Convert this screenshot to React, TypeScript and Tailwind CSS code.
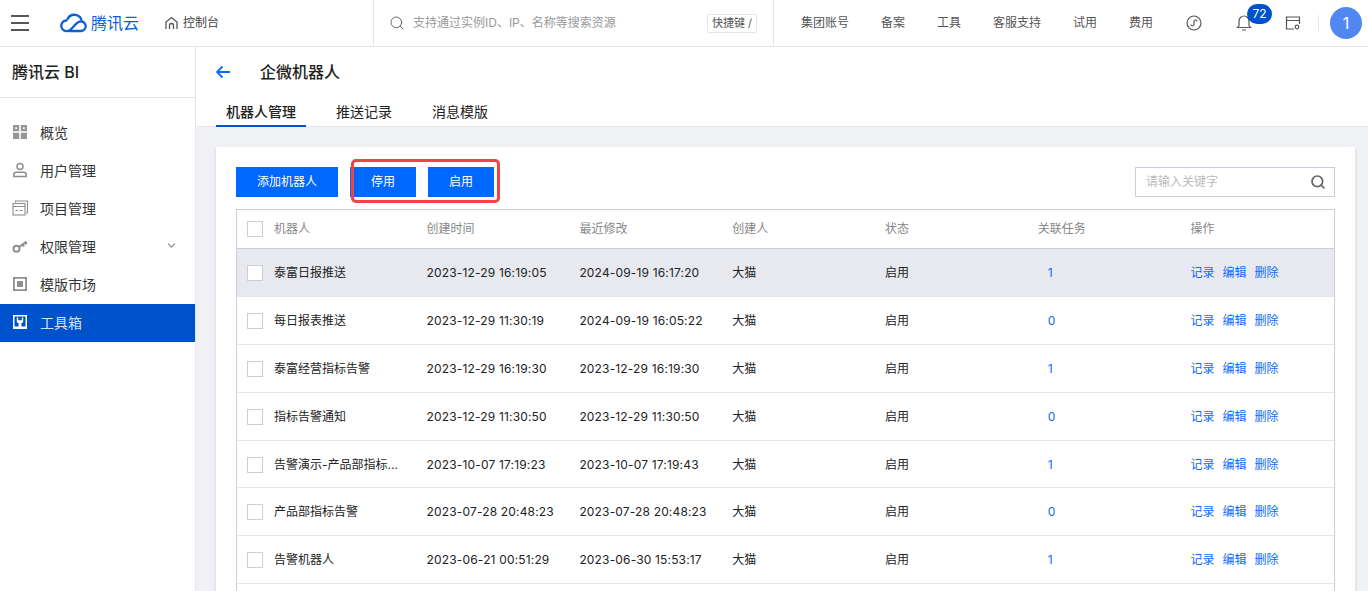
import { ChevronDown, Search } from 'lucide-react';

const font = { fontFamily: '"Inter", "Noto Sans CJK SC", sans-serif' };

const topLinks = ['集团账号', '备案', '工具', '客服支持', '试用', '费用'];

const rows = [
  { name: '泰富日报推送', created: '2023-12-29 16:19:05', updated: '2024-09-19 16:17:20', tasks: 1 },
  { name: '每日报表推送', created: '2023-12-29 11:30:19', updated: '2024-09-19 16:05:22', tasks: 0 },
  { name: '泰富经营指标告警', created: '2023-12-29 16:19:30', updated: '2023-12-29 16:19:30', tasks: 1 },
  { name: '指标告警通知', created: '2023-12-29 11:30:50', updated: '2023-12-29 11:30:50', tasks: 0 },
  { name: '告警演示-产品部指标...', created: '2023-10-07 17:19:23', updated: '2023-10-07 17:19:43', tasks: 1 },
  { name: '产品部指标告警', created: '2023-07-28 20:48:23', updated: '2023-07-28 20:48:23', tasks: 0 },
  { name: '告警机器人', created: '2023-06-21 00:51:29', updated: '2023-06-30 15:53:17', tasks: 1 },
];

function CloudLogo() {
  return (
    <svg width="27" height="20" viewBox="0 0 27 20" fill="none" stroke="#0d5fd8" strokeWidth="2.300" strokeLinecap="round">
      <path d="M9 18h12a4.800 4.800 0 0 0 .8-9.500A7.500 7.500 0 0 0 7.600 6" />
      <path d="M6.500 7.500a5.300 5.300 0 1 0 1.500 10.400c2.400-.5 4.300-3 6.200-5.100 2-2.200 3.700-4.200 6.600-4.400" />
    </svg>
  );
}

function NavIcon({ name }: { name: string }) {
  if (name === 'grid') {
    return (
      <svg width="16" height="16" viewBox="0 0 16 16" fill="#959595" className="shrink-0">
        <path fillRule="evenodd" d="M1 1h6.200v6.200H1zM3.200 3.200v1.800h1.800V3.200zM8.800 1H15v6.200H8.800zM11 3.200v1.800h1.800V3.200zM1 8.800h6.200V15H1zM8.800 8.800H15V15H8.800z" />
      </svg>
    );
  }
  if (name === 'user') {
    return (
      <svg width="16" height="16" viewBox="0 0 16 16" fill="none" stroke="#8f8f8f" strokeWidth="1.500" className="shrink-0">
        <circle cx="8" cy="4.500" r="3" />
        <path d="M1.800 14.500v-1.800c0-1.400 1.200-2.500 2.500-2.500h7.400c1.300 0 2.500 1.100 2.500 2.500v1.800z" />
      </svg>
    );
  }
  if (name === 'project') {
    return (
      <svg width="16" height="16" viewBox="0 0 16 16" fill="none" stroke="#8f8f8f" strokeWidth="1.100" className="shrink-0">
        <path d="M3.500 2.500V1h12v12H14" />
        <rect x="1" y="3.500" width="12" height="11.500" />
        <path d="M1 6.500h12M3.500 10.500h2.500M7.500 10.500h3" />
      </svg>
    );
  }
  if (name === 'key') {
    return (
      <svg width="16" height="16" viewBox="0 0 16 16" fill="none" stroke="#8f8f8f" strokeWidth="2" className="shrink-0">
        <circle cx="4.500" cy="10.800" r="3" />
        <path d="M7 9l7.500-5.500M10.500 6.500l1.600 2M13 4.500l1.500 1.800" />
      </svg>
    );
  }
  if (name === 'template') {
    return (
      <svg width="16" height="16" viewBox="0 0 16 16" fill="#8f8f8f" className="shrink-0">
        <path fillRule="evenodd" d="M1 1h14v14H1zM2.800 2.800v10.400h10.400V2.800zM5 5h6v6H5z" />
      </svg>
    );
  }
  return (
    <svg width="16" height="16" viewBox="0 0 16 16" className="shrink-0">
      <rect x="1" y="1" width="14" height="14" fill="#fff" />
      <rect x="2.500" y="2.500" width="11" height="10" fill="#0052cc" />
      <path d="M4.800 3.500v3.700c0 1 .8 1.800 1.800 1.800V15h2.800V9c1 0 1.800-.8 1.800-1.800V3.500H9.800v2.700H6.200V3.500z" fill="#fff" />
    </svg>
  );
}

const sideItems = [
  { icon: 'grid', label: '概览' },
  { icon: 'user', label: '用户管理' },
  { icon: 'project', label: '项目管理' },
  { icon: 'key', label: '权限管理', arrow: true },
  { icon: 'template', label: '模版市场' },
  { icon: 'tool', label: '工具箱', active: true },
];

const gridCols = 'grid grid-cols-[179.6px_152.8px_152.8px_152.8px_152.8px_152.8px_1fr] items-center';

function Checkbox() {
  return <span className="block h-4 w-4 shrink-0 border border-[#c9ced9] bg-white" />;
}

export default function App() {
  return (
    <div style={font} className="flex h-screen flex-col overflow-hidden bg-[#eff1f5] text-[12px] text-[#222]">
      {/* 顶部导航 */}
      <header className="flex h-[47px] shrink-0 items-center border-b border-[#e4e6eb] bg-white">
        <div className="flex h-full w-[374px] shrink-0 items-center border-r border-[#e8e9ed]">
          <div className="ml-[11px] flex w-[18px] flex-col gap-[5px]">
            <span className="h-[2px] bg-[#555]" />
            <span className="h-[2px] bg-[#555]" />
            <span className="h-[2px] bg-[#555]" />
          </div>
          <div className="ml-[31px] flex items-center gap-[4px]">
            <CloudLogo />
            <span className="text-[16px] text-[#0d5fd8]">腾讯云</span>
          </div>
          <div className="ml-[25px] flex items-center gap-[4px] text-[#444]">
            <svg width="15" height="15" viewBox="0 0 15 15" fill="none" stroke="#555" strokeWidth="1.300">
              <path d="M2 13V6l5.500-4.500L13 6v7" />
              <path d="M5.500 13V9.500a2 2 0 0 1 4 0V13" />
            </svg>
            <span>控制台</span>
          </div>
        </div>
        <div className="flex h-full w-[400px] shrink-0 items-center border-r border-[#e8e9ed] pl-[15px]">
          <Search size={16} strokeWidth={1.500} className="text-[#666]" />
          <span className="ml-[8px] text-[#999]">支持通过实例ID、IP、名称等搜索资源</span>
          <span className="ml-auto mr-[16px] flex h-[19px] items-center rounded-[2px] border border-[#e4e6eb] px-[4px] text-[11px] text-[#555]">
            快捷键 /
          </span>
        </div>
        <nav className="ml-[27px] flex items-center gap-[32px] text-[#555]">
          {topLinks.map((link) => (
            <span key={link}>{link}</span>
          ))}
        </nav>
        <svg width="16" height="16" viewBox="0 0 16 16" fill="none" stroke="#555" strokeWidth="1.200" className="ml-[33px]">
          <circle cx="8" cy="8" r="7" />
          <path d="M5 9.500a1.500 1.500 0 1 0 3 0V6.500a1.500 1.500 0 1 1 3 0" />
        </svg>
        <div className="relative ml-[34px]">
          <svg width="16" height="18" viewBox="0 0 16 18" fill="none" stroke="#555" strokeWidth="1.200">
            <path d="M1.500 13.500h13l-1.500-2V7a5 5 0 0 0-10 0v4.500zM6 16h4" />
          </svg>
          <span className="absolute -top-[10px] left-[11px] flex h-[20px] w-[25px] items-center justify-center rounded-full bg-[#0052cc] text-[12px] text-white">
            72
          </span>
        </div>
        <svg width="16" height="16" viewBox="0 0 16 16" fill="none" stroke="#555" strokeWidth="1.200" className="ml-[33px]">
          <path d="M9 14H1.500V2h13v7M1.500 5.500h13" />
          <circle cx="12" cy="12" r="1.800" />
        </svg>
        <span className="ml-[17px] h-[16px] w-px bg-[#e4e6eb]" />
        <span className="ml-[11px] flex h-[32px] w-[32px] items-center justify-center rounded-full bg-[#5087f0] text-[16px] text-white">
          1
        </span>
      </header>

      <div className="flex min-h-0 flex-1">
        {/* 左侧菜单 */}
        <aside className="w-[196px] shrink-0 border-r border-[#e4e6eb] bg-white">
          <div className="flex h-[51px] items-center border-b border-[#e4e6eb] pl-[12px] text-[16px] font-medium text-[#222]">
            腾讯云 BI
          </div>
          <nav className="mt-[16px]">
            {sideItems.map((item) => (
              <div
                key={item.label}
                className={`flex h-[38px] items-center pb-[2px] pl-[12px] text-[14px] ${
                  item.active ? 'bg-[#0052cc] text-[#cfe0ff]' : 'text-[#333]'
                }`}
              >
                <NavIcon name={item.icon} />
                <span className="ml-[12px]">{item.label}</span>
                {item.arrow && <ChevronDown size={13} className="ml-auto mr-[17px] -translate-y-[1px] text-[#888]" />}
              </div>
            ))}
          </nav>
        </aside>

        <main className="min-w-0 flex-1">
          <div className="h-[80px] border-b border-[#e4e6eb] bg-white">
            <div className="flex h-[51px] items-center pb-[2px] pl-[19px]">
              <svg width="16" height="16" viewBox="0 0 16 16" fill="none" stroke="#0a6cff" strokeWidth="1.800">
                <path d="M15 8H2M7.500 2.500 2 8l5.500 5.500" />
              </svg>
              <h1 className="ml-[29px] text-[16px] font-medium text-[#222]">企微机器人</h1>
            </div>
            <div className="ml-[20px] flex h-[29px] gap-[20px] text-[14px]">
              <span className="border-b-2 border-[#0052cc] px-[10px] pt-[3px] font-medium">机器人管理</span>
              <span className="px-[10px] pt-[3px]">推送记录</span>
              <span className="px-[10px] pt-[3px]">消息模版</span>
            </div>
          </div>

          <section className="relative ml-[20px] mr-[13px] mt-[20px] bg-white px-[20px] pt-[20px] shadow-[0_2px_4px_rgba(54,58,80,0.16)]">
            <div className="flex items-center gap-[12px]">
              <button className="h-[30px] w-[102px] bg-[#0068ff] text-white">添加机器人</button>
              <button className="h-[30px] w-[66px] bg-[#0068ff] text-white">停用</button>
              <button className="h-[30px] w-[66px] bg-[#0068ff] text-white">启用</button>
              <div className="ml-auto flex h-[30px] w-[200px] items-center border border-[#c9ced9] pl-[10px] pr-[8px] text-[#bbb]">
                请输入关键字
                <Search size={16} strokeWidth={2.600} className="ml-auto text-[#666]" />
              </div>
            </div>

            {/* 标注框 */}
            <div className="absolute left-[135px] top-[12px] h-[44px] w-[149px] rounded-[5px] border-[3px] border-[#ee4444]" />

            <div className="mt-[12px] border border-[#c9ced9]">
              <div className={`${gridCols} h-[39px] border-b border-[#c9ced9] text-[#888]`}>
                <div className="flex items-center gap-[11px] pl-[10px]">
                  <Checkbox />
                  机器人
                </div>
                <div className="pl-[10px]">创建时间</div>
                <div className="pl-[10px]">最近修改</div>
                <div className="pl-[10px]">创建人</div>
                <div className="pl-[10px]">状态</div>
                <div className="pl-[10px]">关联任务</div>
                <div className="pl-[10px]">操作</div>
              </div>
              {rows.map((row, i) => (
                <div
                  key={row.name}
                  className={`${gridCols} h-[47.9px] border-b border-[#e4e6eb] pt-[1px] ${i === 0 ? 'bg-[#e7e9ef]' : 'bg-white'}`}
                >
                  <div className="flex items-center gap-[11px] pl-[10px]">
                    <Checkbox />
                    <span>{row.name}</span>
                  </div>
                  <div className="pl-[10px] tracking-[0.16px]">{row.created}</div>
                  <div className="pl-[10px] tracking-[0.16px]">{row.updated}</div>
                  <div className="pl-[10px]">大猫</div>
                  <div className="pl-[10px]">启用</div>
                  <div className="pl-[20px] text-[#0a6cff]">{row.tasks}</div>
                  <div className="flex gap-[8px] pl-[10px] text-[#0a6cff]">
                    <span>记录</span>
                    <span>编辑</span>
                    <span>删除</span>
                  </div>
                </div>
              ))}
              <div className="h-[48px]" />
            </div>
          </section>
        </main>
      </div>
    </div>
  );
}
